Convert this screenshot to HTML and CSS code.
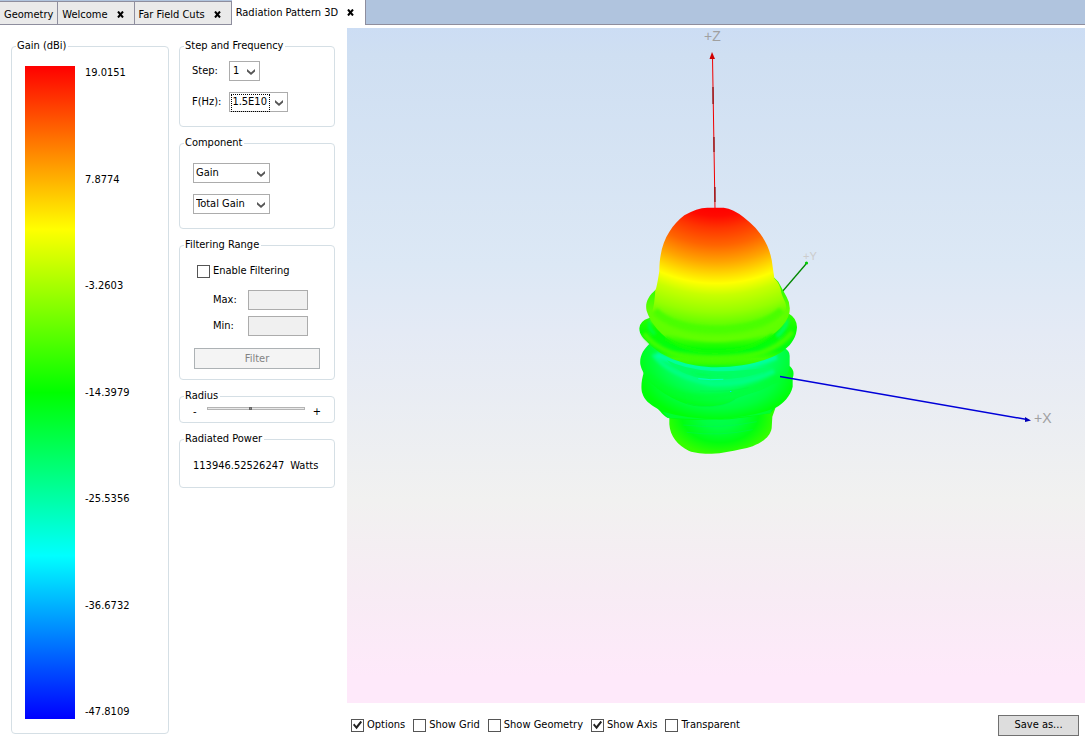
FILE: index.html
```html
<!DOCTYPE html>
<html lang="en">
<head>
<meta charset="utf-8">
<title>Radiation Pattern 3D</title>
<link rel="stylesheet" href="styles.css">
</head>
<body>
<nav class="tabs">
  <button class="tab">Geometry</button>
  <button class="tab">Welcome <svg class="close" viewBox="0 0 7 7"><path d="M1 .5 6 6.5M6 .5 1 6.5"/></svg></button>
  <button class="tab">Far Field Cuts <svg class="close" viewBox="0 0 7 7"><path d="M1 .5 6 6.5M6 .5 1 6.5"/></svg></button>
  <button class="tab active">Radiation Pattern 3D <svg class="close" viewBox="0 0 7 7"><path d="M1 .5 6 6.5M6 .5 1 6.5"/></svg></button>
  <span class="rest"></span>
</nav>
<main class="main">
  <fieldset class="group gain">
    <legend>Gain (dBi)</legend>
    <div class="scale">
      <div class="bar"></div>
      <div class="ticks"><span>19.0151</span><span>7.8774</span><span>-3.2603</span><span>-14.3979</span><span>-25.5356</span><span>-36.6732</span><span>-47.8109</span></div>
    </div>
  </fieldset>
  <form class="options">
    <fieldset class="group">
      <legend>Step and Frequency</legend>
      <div class="step">
        <div class="row"><label for="step">Step:</label><span class="pick"><select id="step" class="w-step"><option>1</option></select><svg class="chev" viewBox="0 0 8 6"><path d="M0 0 4 3.4 8 0V2.4L4 6 0 2.4Z"/></svg></span></div>
        <div class="row"><label for="freq">F(Hz):</label><span class="pick focused"><select id="freq" class="w-freq"><option>1.5E10</option></select><svg class="chev" viewBox="0 0 8 6"><path d="M0 0 4 3.4 8 0V2.4L4 6 0 2.4Z"/></svg></span></div>
      </div>
    </fieldset>
    <fieldset class="group">
      <legend>Component</legend>
      <div class="component">
        <span class="pick"><select aria-label="Component" class="w-comp"><option>Gain</option></select><svg class="chev" viewBox="0 0 8 6"><path d="M0 0 4 3.4 8 0V2.4L4 6 0 2.4Z"/></svg></span>
        <span class="pick"><select aria-label="Gain type" class="w-comp"><option>Total Gain</option></select><svg class="chev" viewBox="0 0 8 6"><path d="M0 0 4 3.4 8 0V2.4L4 6 0 2.4Z"/></svg></span>
      </div>
    </fieldset>
    <fieldset class="group">
      <legend>Filtering Range</legend>
      <div class="filtering">
        <label class="check"><input type="checkbox">Enable Filtering</label>
        <div class="limits">
          <label for="max">Max:</label><input id="max" type="text" disabled>
          <label for="min">Min:</label><input id="min" type="text" disabled>
        </div>
        <button class="btn filter" type="button" disabled>Filter</button>
      </div>
    </fieldset>
    <fieldset class="group">
      <legend>Radius</legend>
      <div class="slider"><span>-</span><input type="range" aria-label="Radius" min="0" max="100" value="45"><span>+</span></div>
    </fieldset>
    <fieldset class="group">
      <legend>Radiated Power</legend>
      <div class="watts"><span>113946.52526247</span><span>Watts</span></div>
    </fieldset>
  </form>
  <section class="viewer">
    <div class="canvas">
      <svg class="scene" viewBox="347 28 738 675" preserveAspectRatio="xMidYMid meet">
        <defs>
          <radialGradient id="cap" gradientUnits="userSpaceOnUse" cx="290" cy="-165" r="600">
            <stop offset=".34" stop-color="#f00"/><stop offset=".38" stop-color="#ff0a00"/><stop offset=".44" stop-color="#ff3400"/><stop offset=".525" stop-color="#ff6400"/><stop offset=".61" stop-color="#ffa400"/><stop offset=".675" stop-color="#ffdc00"/><stop offset=".717" stop-color="#ff0"/><stop offset=".775" stop-color="#c8ff00"/><stop offset=".86" stop-color="#96ff00"/><stop offset=".94" stop-color="#54ff00"/><stop offset="1" stop-color="#58ff00"/>
          </radialGradient>
          <linearGradient id="ring2" gradientUnits="userSpaceOnUse" x1="0" y1="290" x2="0" y2="470">
            <stop offset="0" stop-color="#38ff00"/><stop offset=".3" stop-color="#60ff00"/><stop offset=".7" stop-color="#5cff00"/><stop offset=".9" stop-color="#1cff00"/><stop offset="1" stop-color="#00ff08"/>
          </linearGradient>
          <linearGradient id="ring3" gradientUnits="userSpaceOnUse" x1="0" y1="365" x2="0" y2="517">
            <stop offset="0" stop-color="#2cff00"/><stop offset=".3" stop-color="#08ff00"/><stop offset=".65" stop-color="#00ff10"/><stop offset=".83" stop-color="#44ff00"/><stop offset=".93" stop-color="#30ff00"/><stop offset="1" stop-color="#00ff28"/>
          </linearGradient>
          <radialGradient id="lobe4" gradientUnits="userSpaceOnUse" cx="0" cy="0" r="1" gradientTransform="translate(300 480) scale(245 160)">
            <stop offset="0" stop-color="#00ffa0"/><stop offset=".5" stop-color="#00ff78"/><stop offset=".75" stop-color="#00ff4c"/><stop offset="1" stop-color="#00ff18"/>
          </radialGradient>
          <radialGradient id="lobe5" gradientUnits="userSpaceOnUse" cx="0" cy="0" r="1" gradientTransform="translate(295 540) scale(235 136)">
            <stop offset=".5" stop-color="#00ff58"/><stop offset=".75" stop-color="#00ff3c"/><stop offset="1" stop-color="#00ff08"/>
          </radialGradient>
          <radialGradient id="foot" gradientUnits="userSpaceOnUse" cx="0" cy="0" r="1" gradientTransform="translate(300 660) scale(165 118)">
            <stop offset="0" stop-color="#00ff50"/><stop offset=".35" stop-color="#00ff40"/><stop offset=".7" stop-color="#00ff10"/><stop offset="1" stop-color="#34ff00"/>
          </radialGradient>
          <filter id="soft" x="-20%" y="-50%" width="140%" height="200%"><feGaussianBlur stdDeviation="5"/></filter>
        </defs>
        <g class="axis">
          <path d="M712.5 57 715 209" stroke="#f00000"/>
          <path d="M713 87v17M714 137v15M715 187v15" stroke="#700000"/>
          <path d="M712 52 709.5 59H715Z" fill="#d00000"/>
          <path d="M782 292 806 264" stroke="#080" stroke-width="1.3"/>
          <circle cx="806.5" cy="263" r="1.6" fill="#0c0"/>
        </g>
        <text class="mark" x="704" y="41">+Z</text>
        <text class="mark faint" x="803" y="260">+Y</text>
        <text class="mark" x="1034" y="423">+X</text>
        <g transform="translate(620 195) scale(.33333)">
          <path fill="url(#foot)" d="M148 650V688C150 724 174 752 206 767C225 775 250 776 275 776Q300 776 320 771C350 766 376 761 398 754C425 742 450 728 455 700L457 665 466 640Z"/>
          <path d="M190 690Q300 703 410 680M200 712Q300 725 398 704" fill="none" stroke="#00f060" stroke-width="3" opacity=".4"/>
          <path fill="url(#lobe5)" d="M72 530C64 555 62 580 67 595C73 616 90 628 110 640C122 648 128 662 144 669C190 675 240 675 290 674C350 674 405 660 451 655L467 638C488 628 512 603 518 575V550Q526 528 510 514L300 480Z"/>
          <path d="M128 650Q205 672 300 673Q405 662 456 642L452 655Q400 662 290 675L144 669Z" fill="#00ff30"/>
          <path fill="url(#lobe4)" d="M88 447C72 462 58 482 61 508C64 524 71 530 73 542C105 585 180 629 235 634C280 637 320 631 345 613C376 596 427 589 454 569C485 560 508 540 509 512V482Q508 465 492 460Z"/>
          <path d="M90 552Q150 600 235 604Q320 604 370 586 430 570 476 545" fill="none" stroke="#00ff28" stroke-width="16" opacity=".4" filter="url(#soft)"/>
          <g filter="url(#soft)" fill="none"><path d="M100 478Q150 542 275 566Q380 570 462 528" stroke="#00ff84" stroke-width="14"/><path d="M110 478Q195 520 285 520Q380 520 470 485" stroke="#00ffa0" stroke-width="16"/></g>
          <path d="M140 495Q190 553 290 553Q400 553 453 516Q360 532 275 528Q190 522 140 495Z" fill="#00ff64"/>
          <path d="M180 522Q290 558 407 530Q315 550 240 540Z" fill="#00ff28" filter="url(#soft)"/>
          <path d="M235 551Q270 556 310 553" fill="none" stroke="#00ffc0" stroke-width="3"/>
          <path d="M240 588Q330 592 385 578M200 625Q235 636 270 635Q315 634 345 613" fill="none" stroke="#00f048" stroke-width="2" opacity=".6"/>
          <rect x="330" y="588" width="4" height="3" fill="#00d8ff"/>
          <path fill="url(#ring3)" d="M86 370Q60 378 58 400C58 420 70 430 84 443C125 488 205 516 290 517C380 517 460 492 493 465C517 447 529 425 531 397Q530 369 508 357L420 340H180Z"/>
          <g filter="url(#soft)" fill="none"><path d="M92 375Q80 397 105 418" stroke="#00ff40" stroke-width="10"/><path d="M501 374Q498 401 470 424" stroke="#00ff58" stroke-width="13"/><path d="M72 415Q125 491 290 496Q455 489 518 410" stroke="#40ff00" stroke-width="15"/></g>
          <path fill="url(#ring2)" d="M106 285C85 303 74 325 80 348C90 382 125 425 170 450Q225 473 290 473Q370 475 428 440C465 419 500 387 508 355Q513 327 500 306L475 260 463 248Z"/>
          <path fill="url(#cap)" d="M118 228C118 145 150 95 193 61Q230 39 262 38H311Q340 41 371 67C425 108 452 155 458 215L463 250Q482 270 484 293C492 320 509 333 490 355C440 420 370 432 290 432C190 430 122 405 96 355Q104 325 106 285 110 280 118 228Z"/>
          <g filter="url(#soft)" fill="none"><path d="M105 347Q160 402 290 404Q425 400 485 345" stroke="#48ff00" stroke-width="20"/><path d="M95 370Q170 434 290 432Q425 430 490 370" stroke="#60ff00" stroke-width="18"/><path d="M135 430Q205 475 300 470 400 467 460 418" stroke="#10ff00" stroke-width="10"/></g>
        </g>
        <g class="axis">
          <path d="M780 376.500 1027 419.500" stroke="#0000d8" stroke-width="1.400"/>
          <path d="M1031 420.500 1025 417V422Z" fill="#0000b8"/>
        </g>
      </svg>
    </div>
    <div class="footer">
      <label class="check"><input type="checkbox" checked>Options</label>
      <label class="check"><input type="checkbox">Show Grid</label>
      <label class="check"><input type="checkbox">Show Geometry</label>
      <label class="check"><input type="checkbox" checked>Show Axis</label>
      <label class="check"><input type="checkbox">Transparent</label>
      <button class="btn save" type="button">Save as...</button>
    </div>
  </section>
</main>
</body>
</html>
```
FILE: styles.css
```css
* { box-sizing: border-box; }
body {
  margin: 0;
  min-height: 100vh;
  display: flex;
  flex-direction: column;
  background: #fff;
  color: #000;
  font: 11px/14px Tahoma, "DejaVu Sans Condensed", "Noto Sans", sans-serif;
}
button, input, select { font: inherit; color: inherit; margin: 0; }

.tabs { display: flex; height: 25px; background: #b0c4de; margin-bottom: 3px; }
.tab {
  display: flex;
  align-items: center;
  justify-content: space-between;
  gap: 9px;
  margin-top: 1px;
  padding: 3px 10px 0 4px;
  border: solid #8e8e9e;
  border-width: 1px 1px 1px 0;
  background: #eaeaea;
  white-space: nowrap;
}
.tab:first-child { padding-right: 4px; }
.tab.active { margin-top: 0; padding: 0 11px 0 4px; border-width: 0 1px 0 0; background: #fff; }
.rest { flex: 1; border-bottom: 1px solid #8e8e9e; }
.close { width: 7px; height: 7px; fill: none; stroke: #000; stroke-width: 2; }

.main { flex: 1; display: flex; }
.group { min-width: 0; margin: 0; padding: 0; border: 1px solid #d5dfe5; border-radius: 4px; }
.group legend { margin-left: 4px; padding: 0 2px 0 1px; line-height: 14px; }

.gain { width: 158px; margin: 11px 10px 12px 11px; }
.scale { display: flex; gap: 10px; height: 100%; padding: 13px 13px 14px; }
.bar { width: 50px; background: linear-gradient(#f00, #ff0 25%, #0f0 50%, #0ff 75%, #00f); }
.ticks { display: flex; flex-direction: column; justify-content: space-between; }

.options { display: flex; flex-direction: column; gap: 9px; width: 156px; margin: 11px 12px 12px 0; }
.step { padding: 8px 12px 14px; }
.row { display: flex; align-items: center; gap: 8px; }
.row label { min-width: 29px; }
.row + .row { margin-top: 11px; }
.pick { position: relative; display: inline-flex; }
.pick select {
  appearance: none;
  height: 20px;
  padding: 0 2px;
  border: 1px solid #acacac;
  border-radius: 0;
  background: #fff;
}
.pick .w-step { width: 31px; padding-left: 3px; }
.w-freq { width: 59px; }
.w-comp { width: 77px; }
.chev { position: absolute; right: 5px; top: 8px; width: 8px; height: 6px; fill: #555; pointer-events: none; }
.focused::before { content: ""; position: absolute; left: 2px; top: 2px; width: 37px; height: 16px; border: 1px dotted #000; pointer-events: none; z-index: 1; }
.component { display: flex; flex-direction: column; align-items: flex-start; gap: 11px; padding: 13px 13px 14px; }

.check { display: flex; align-items: center; gap: 3px; white-space: nowrap; }
.check input { appearance: none; display: grid; place-items: center; width: 13px; height: 13px; border: 1px solid #555; background: #fff; }
.check input:checked::before {
  content: "";
  width: 9px;
  height: 9px;
  background: #222;
  clip-path: polygon(0 50%, 14% 34%, 37% 62%, 84% 4%, 100% 20%, 40% 98%);
}
.filtering { padding: 12px 14px 10px; }
.filtering .check { padding-left: 3px; }
.limits { display: grid; grid-template-columns: 27px 60px; gap: 6px 8px; align-items: center; margin: 12px 0 12px 19px; }
.limits input { width: 60px; height: 20px; border: 1px solid #acacac; background: #f0f0f0; }
.btn { display: block; height: 21px; padding: 0; border: 1px solid #707070; background: #ddd; }
.filter { width: 100%; border-color: #adb2b5; background: #f4f4f4; color: #838383; }
.slider { display: flex; height: 19px; padding: 0 13px; align-items: flex-start; }
.slider span { padding-top: 2px; }
.slider input { appearance: none; flex: 1; min-width: 0; height: 3px; margin: 4px 8px 0 10px; border: 1px solid #b4b4b4; background: #e8e8e8; }
.slider input::-webkit-slider-thumb { appearance: none; width: 3px; height: 3px; border: 1px solid #666; background: #888; }
.watts { display: flex; gap: 6px; padding: 13px 13px 14px; }

.viewer { flex: 1; min-width: 0; display: flex; flex-direction: column; }
.canvas { flex: 1; min-height: 0; position: relative; background: linear-gradient(#ccddf4, #cfdff2 4%, #dce8f5 35%, #e4eaf5 45%, #f1f1f0 70%, #f7ecf4 83%, #fee9fa 96%); }
.scene { position: absolute; inset: 0; width: 100%; height: 100%; }
.axis { fill: none; }
.mark { font: 14px "Liberation Sans", sans-serif; fill: #a0a0a0; }
.faint { font-size: 11px; fill: #ccc; }
.footer { display: flex; align-items: center; gap: 8px; height: 43px; padding: 1px 6px 0 4px; }
.save { width: 81px; margin-left: auto; }
```
